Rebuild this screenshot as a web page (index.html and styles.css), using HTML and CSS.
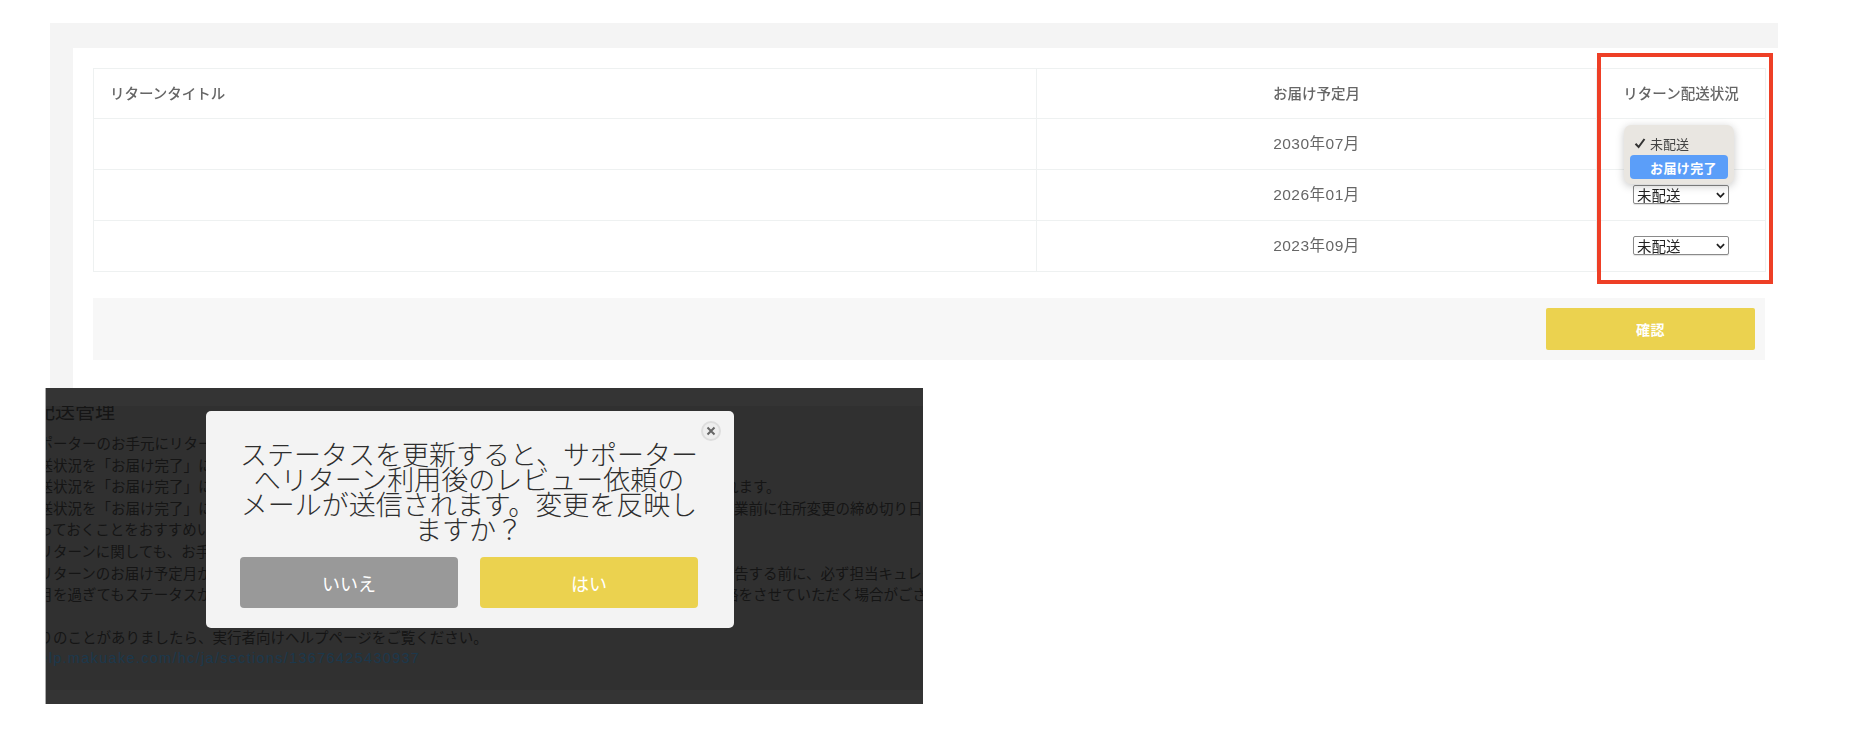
FILE: index.html
```html
<!DOCTYPE html>
<html lang="ja">
<head>
<meta charset="utf-8">
<title>リターン配送状況</title>
<link rel="stylesheet" href="styles.css">
</head>
<body>
<section class="shot">
  <div class="panel">
    <table class="returns">
      <thead>
        <tr><th class="col-title">リターンタイトル</th><th class="col-month">お届け予定月</th><th class="col-status">リターン配送状況</th></tr>
      </thead>
      <tbody>
        <tr><td></td><td class="date">2030年07月</td><td class="center"><select class="status"><option>未配送</option><option>お届け完了</option></select></td></tr>
        <tr><td></td><td class="date">2026年01月</td><td class="center"><select class="status"><option>未配送</option><option>お届け完了</option></select></td></tr>
        <tr><td></td><td class="date">2023年09月</td><td class="center"><select class="status"><option>未配送</option><option>お届け完了</option></select></td></tr>
      </tbody>
    </table>
    <div class="actions"><button class="confirm">確認</button></div>
  </div>
  <div class="menu">
    <div class="menu-item"><svg class="check" viewBox="0 0 12 12"><path d="M1.5 6.8 4.6 10 10.5 2" fill="none" stroke="#333" stroke-width="2"/></svg>未配送</div>
    <div class="menu-item active">お届け完了</div>
  </div>
  <div class="highlight-box"></div>
</section>
<section class="dark">
  <div class="dark-band"></div>
  <div class="dark-body">
    <h2 class="dark-title">配送管理</h2>
    <p class="line grid">サポーターのお手元にリターン</p>
    <p class="line grid">配送状況を「お届け完了」に</p>
    <p class="line grid">配送状況を「お届け完了」に</p>
    <p class="line grid">配送状況を「お届け完了」に</p>
    <p class="line grid">持っておくことをおすすめいた</p>
    <p class="line grid">・リターンに関しても、お手元</p>
    <p class="line grid">・リターンのお届け予定月が</p>
    <p class="line grid">ヶ月を過ぎてもステータスが</p>
    <p class="line">&nbsp;</p>
    <p class="line grid">困りのことがありましたら、実行者向けヘルプページをご覧ください。</p>
    <p class="line link">https://help.makuake.com/hc/ja/sections/13676425430937</p>
    <div class="right-lines">
      <p class="line">&nbsp;</p>
      <p class="line">&nbsp;</p>
      <p class="line tuck">れます。</p>
      <p class="line">業前に住所変更の締め切り日</p>
      <p class="line">&nbsp;</p>
      <p class="line">&nbsp;</p>
      <p class="line">告する前に、必ず担当キュレーター</p>
      <p class="line tuck">絡をさせていただく場合がございます</p>
    </div>
  </div>
  <div class="dark-band bottom"></div>
  <div class="modal">
    <button class="close" aria-label="閉じる"><svg viewBox="0 0 10 10"><path d="M1.5 1.5 8.5 8.5M8.5 1.5 1.5 8.5" stroke="#666" stroke-width="2" fill="none"/></svg></button>
    <p class="message">ステータスを更新すると、サポーター<br>へリターン利用後のレビュー依頼の<br>メールが送信されます。変更を反映し<br>ますか？</p>
    <div class="choices">
      <button class="choice no">いいえ</button>
      <button class="choice yes">はい</button>
    </div>
  </div>
</section>
</body>
</html>
```

FILE: styles.css
```css
* { box-sizing: border-box; }
html, body { margin: 0; padding: 0; background: #fff; }
body {
  height: 752px;
  overflow: hidden;
  padding-top: 23px;
  font-family: "Noto Sans CJK JP", "Noto Sans", sans-serif;
}
.shot {
  position: relative;
  width: 1728px;
  height: 365px;
  margin-left: 50px;
  background: #f4f4f4;
  padding: 25px 0 0 23px;
}
.panel {
  height: 340px;
  background: #fff;
  padding: 20px 13px 0 20px;
}
.returns {
  width: 1672px;
  table-layout: fixed;
  border-collapse: collapse;
  color: #666;
  font-size: 14.5px;
}
.returns th, .returns td { border: 1px solid #eef1f1; padding: 0 0 2px; }
.returns td { padding-bottom: 4px; }
.returns th { height: 50px; font-weight: 500; text-align: center; filter: blur(.5px); }
.returns td { height: 51px; }
.col-title { width: 943px; text-align: left !important; padding-left: 16px !important; }
.col-month { width: 560px; }
.col-status { width: 169px; }
.center { text-align: center; }
.date {
  text-align: center;
  font-family: "Liberation Sans", "Noto Sans CJK JP", sans-serif;
  font-size: 15.5px;
  letter-spacing: .5px;
  filter: blur(.5px);
}
.status {
  display: inline-block;
  width: 96px;
  height: 19px;
  padding: 0 0 0 3px;
  font: 14.5px/17px "Noto Sans CJK JP", sans-serif;
  color: #222;
  appearance: none;
  background: #fff url("data:image/svg+xml,%3Csvg xmlns='http://www.w3.org/2000/svg' viewBox='0 0 10 6'%3E%3Cpath d='M1 1 5 5 9 1' fill='none' stroke='%23222' stroke-width='2'/%3E%3C/svg%3E") no-repeat right 3px center / 9px 6px;
  border: 1px solid #8a8a8a;
  border-radius: 2px;
  box-shadow: 0 1px 1px rgba(0, 0, 0, .12);
  vertical-align: middle;
  filter: blur(.4px);
}
.actions {
  display: flex;
  justify-content: flex-end;
  align-items: center;
  width: 1672px;
  height: 62px;
  margin-top: 26px;
  padding-right: 10px;
  background: #f7f7f7;
}
.confirm {
  width: 209px;
  height: 42px;
  border: 0;
  border-radius: 2px;
  background: #ebd24f;
  color: #fff;
  font: 700 14px "Noto Sans CJK JP", sans-serif;
  letter-spacing: .5px;
  padding-bottom: 2px;
}
.menu {
  position: absolute;
  left: 1574px;
  top: 102px;
  width: 110px;
  height: 59px;
  padding: 6px 6px 5px;
  background: #e9e6e1;
  border-radius: 7px;
  box-shadow: 0 2px 8px rgba(0, 0, 0, .22);
  font-size: 13px;
  color: #444;
  filter: blur(.4px);
}
.menu-item {
  display: flex;
  align-items: center;
  height: 24px;
  padding-left: 20px;
  position: relative;
}
.menu-item.active {
  height: 24px;
  background: #5b9ef9;
  color: #fff;
  font-weight: 700;
  border-radius: 4px;
  letter-spacing: .4px;
}
.check { position: absolute; left: 4px; top: 6px; width: 12px; height: 12px; }
.highlight-box {
  position: absolute;
  left: 1547px;
  top: 30px;
  width: 176px;
  height: 231px;
  border: 4px solid #ee3f26;
}
.dark {
  position: relative;
  width: 878px;
  height: 316px;
  margin-left: 45px;
  background: #303030;
  border-left: 1px solid #aaa;
  overflow: hidden;
}
.dark-band { height: 18px; background: #343434; }
.dark-band.bottom { height: 14px; }
.dark-body {
  position: relative;
  height: 284px;
  overflow: hidden;
  color: #151515;
  font-size: 14.5px;
}
.dark-title {
  margin: -9px 0 7px -11px;
  font-size: 20px;
  line-height: 28px;
  font-weight: 400;
  white-space: nowrap;
}
.line { margin: 0; height: 21.6px; line-height: 21.6px; white-space: nowrap; }
.grid { margin-left: -22px; }
.link {
  margin-left: -70px;
  color: #1c384c;
  font-family: "Liberation Sans", "Noto Sans CJK JP", sans-serif;
  letter-spacing: 1.3px;
}
.right-lines {
  position: absolute;
  left: 688px;
  top: 26px;
  width: 188px;
}
.tuck { margin-left: -10px; }
.modal {
  position: absolute;
  left: 160px;
  top: 23px;
  width: 528px;
  height: 217px;
  padding: 30px 36px 20px 34px;
  background: #f3f3f3;
  border-radius: 5px;
}
.close {
  position: absolute;
  right: 13px;
  top: 10px;
  width: 20px;
  height: 20px;
  padding: 3px;
  border: 2px solid #ddd;
  border-radius: 50%;
  background: #eee;
  display: flex;
}
.close svg { width: 100%; height: 100%; }
.message {
  margin: 0 -10px;
  font-size: 27px;
  font-weight: 300;
  line-height: 25px;
  text-align: center;
  color: #2e2e2e;
  white-space: nowrap;
}
.choices { display: flex; gap: 22px; margin-top: 16px; }
.choice {
  flex: 1;
  height: 51px;
  border: 0;
  border-radius: 4px;
  color: #fff;
  font: 400 18px "Noto Sans CJK JP", sans-serif;
}
.no { background: #999; }
.yes { background: #ebd24f; }
```
